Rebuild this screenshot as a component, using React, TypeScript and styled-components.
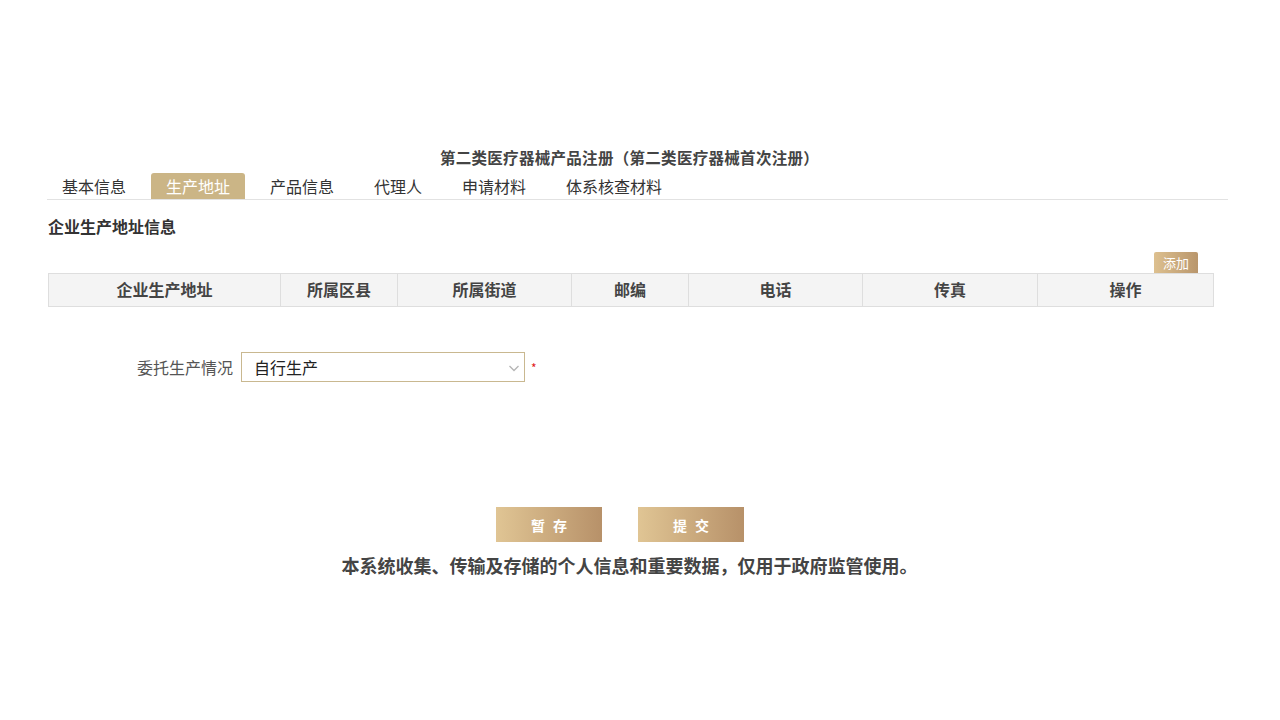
import React from "react";
import styled, { createGlobalStyle } from "styled-components";

const Global = createGlobalStyle`
  html, body { margin: 0; padding: 0; background: #fff; }
  body { font-family: "Microsoft YaHei", "Noto Sans CJK SC", "Noto Sans", sans-serif; color: #333; }
`;

const Page = styled.div`
  width: 1280px;
  height: 720px;
  padding: 145px 52px 0 47px;
  box-sizing: border-box;
`;

const Title = styled.h1`
  margin: 0 16px 4px 0;
  font-size: 15.5px;
  line-height: 24px;
  font-weight: bold;
  color: #444;
  text-align: center;
  letter-spacing: 0.3px;
`;

const Tabs = styled.div`
  display: flex;
  gap: 10px;
  border-bottom: 1px solid #e2e2e2;
`;

const Tab = styled.div<{ $active?: boolean }>`
  height: 26px;
  padding: 0 15px;
  font-size: 16px;
  line-height: 27px;
  color: ${(p) => (p.$active ? "#fff" : "#333")};
  background: ${(p) => (p.$active ? "#cbb586" : "transparent")};
  border-radius: 3px 3px 0 0;
  cursor: pointer;
`;

const SectionTitle = styled.h2`
  margin: 14px 0 0 1px;
  font-size: 16px;
  line-height: 24px;
  font-weight: bold;
  color: #333;
`;

const ToolRow = styled.div`
  display: flex;
  justify-content: flex-end;
  margin: 14px 30px 0 0;
`;

const SmallButton = styled.button`
  width: 44px;
  height: 21px;
  padding: 0;
  border: none;
  border-radius: 2px 2px 0 0;
  background: linear-gradient(90deg, #ddc08f, #b9966c);
  color: #fff;
  font-family: inherit;
  font-size: 13px;
  line-height: 21px;
`;

const Table = styled.table`
  margin-left: 1px;
  width: 1165px;
  border-collapse: collapse;
  table-layout: fixed;
`;

const Th = styled.th`
  height: 33px;
  padding: 0 0 2px;
  box-sizing: border-box;
  background: #f4f4f4;
  border: 1px solid #dedede;
  font-size: 16px;
  line-height: 20px;
  font-weight: bold;
  color: #444;
  text-align: center;
`;

const FormRow = styled.div`
  display: flex;
  align-items: center;
  margin-top: 45px;
`;

const Label = styled.label`
  width: 186px;
  text-align: right;
  font-size: 16px;
  color: #555;
  margin-right: 8px;
`;

const SelectBox = styled.div`
  position: relative;
  width: 284px;
  height: 30px;
  box-sizing: border-box;
  border: 1px solid #c9b890;
  display: flex;
  align-items: center;
  padding-left: 12px;
  font-size: 16px;
  color: #222;
`;

const Chevron = styled.svg`
  position: absolute;
  right: 4px;
  top: 9px;
`;

const Required = styled.span`
  margin-left: 6px;
  color: #e02020;
  font-size: 12px;
  align-self: flex-start;
  margin-top: 7px;
`;

const ButtonRow = styled.div`
  display: flex;
  justify-content: center;
  gap: 36px;
  margin: 125px 35px 0 0;
`;

const MainButton = styled.button`
  width: 106px;
  height: 35px;
  border: none;
  padding: 0;
  background: linear-gradient(90deg, #e0c594, #b79169);
  color: #fff;
  font-family: inherit;
  font-size: 14px;
  font-weight: bold;
  letter-spacing: 8px;
  text-indent: 8px;
  cursor: pointer;
`;

const Notice = styled.p`
  margin: 10px 16px 0 0;
  text-align: center;
  font-size: 18px;
  line-height: 26px;
  font-weight: bold;
  color: #444;
`;

const columns: { name: string; width: number }[] = [
  { name: "企业生产地址", width: 232 },
  { name: "所属区县", width: 117 },
  { name: "所属街道", width: 174 },
  { name: "邮编", width: 117 },
  { name: "电话", width: 174 },
  { name: "传真", width: 175 },
  { name: "操作", width: 176 },
];

const tabs = ["基本信息", "生产地址", "产品信息", "代理人", "申请材料", "体系核查材料"];

export default function App() {
  return (
    <>
      <Global />
      <Page>
        <Title>第二类医疗器械产品注册（第二类医疗器械首次注册）</Title>
        <Tabs>
          {tabs.map((t) => (
            <Tab key={t} $active={t === "生产地址"}>
              {t}
            </Tab>
          ))}
        </Tabs>
        <SectionTitle>企业生产地址信息</SectionTitle>
        <ToolRow>
          <SmallButton>添加</SmallButton>
        </ToolRow>
        <Table>
          <colgroup>
            {columns.map((c) => (
              <col key={c.name} style={{ width: c.width }} />
            ))}
          </colgroup>
          <thead>
            <tr>
              {columns.map((c) => (
                <Th key={c.name}>{c.name}</Th>
              ))}
            </tr>
          </thead>
        </Table>
        <FormRow>
          <Label>委托生产情况</Label>
          <SelectBox>
            自行生产
            <Chevron width="12" height="12" viewBox="0 0 12 12">
              <path d="M1.5 4 L6 8.5 L10.5 4" fill="none" stroke="#b5b5b5" strokeWidth="1.3" />
            </Chevron>
          </SelectBox>
          <Required>*</Required>
        </FormRow>
        <ButtonRow>
          <MainButton>暂存</MainButton>
          <MainButton>提交</MainButton>
        </ButtonRow>
        <Notice>本系统收集、传输及存储的个人信息和重要数据，仅用于政府监管使用。</Notice>
      </Page>
    </>
  );
}
